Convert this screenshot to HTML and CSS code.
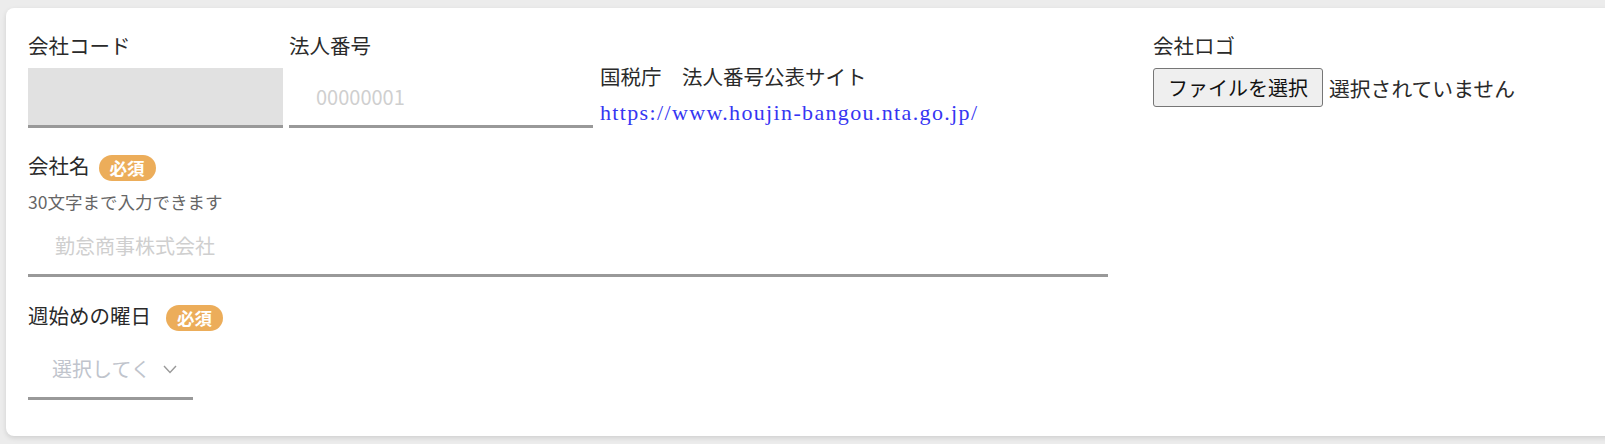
FILE: index.html
```html
<!DOCTYPE html>
<html lang="ja">
<head>
    <meta charset="UTF-8">
    <meta name="viewport" content="width=device-width, initial-scale=1.0">
    <title>会社設定</title>
    <link rel="stylesheet" href="styles.css">
</head>
<body>

    <div class="card">
        <div class="main">
            <div class="top-row">
                <div class="field code">
                    <label>会社コード</label>
                    <input type="text" class="input disabled" disabled>
                </div>
                <div class="field corp">
                    <label>法人番号</label>
                    <input type="text" class="input" placeholder="00000001">
                </div>
                <div class="nta">
                    <p>国税庁　法人番号公表サイト</p>
                    <a href="#">https://www.houjin-bangou.nta.go.jp/</a>
                </div>
            </div>

            <div class="group name">
                <div class="label-row">
                    <label>会社名</label>
                    <span class="badge">必須</span>
                </div>
                <p class="hint">30文字まで入力できます</p>
                <input type="text" class="input" placeholder="勤怠商事株式会社">
            </div>

            <div class="group week">
                <div class="label-row">
                    <label>週始めの曜日</label>
                    <span class="badge wide">必須</span>
                </div>
                <div class="select">
                    <span class="select-text">選択してく</span>
                    <svg width="14" height="9" viewBox="0 0 14 9">
                        <path d="M1 1 L7 7.5 L13 1" fill="none" stroke="#999" stroke-width="1.4"/>
                    </svg>
                </div>
            </div>
        </div>

        <div class="logo">
            <label>会社ロゴ</label>
            <div class="file">
                <button class="file-btn" type="button">ファイルを選択</button>
                <span class="file-name">選択されていません</span>
            </div>
        </div>
    </div>

</body>
</html>
```

FILE: styles.css
```css
html, body {
    overflow: hidden;
}

body {
    font-family: "Noto Sans CJK JP", "Noto Sans", sans-serif;
    background-color: #ececec;
    color: #2a2a2a;
    margin: 0;
    padding: 8px 0 8px 6px;
}

.card {
    display: flex;
    gap: 45px;
    margin-right: -20px;
    background: white;
    padding: 22px 0 36px 22px;
    border-radius: 8px;
    box-shadow: 0 2px 5px rgba(0, 0, 0, 0.12);
}

.main {
    width: 1080px;
}

label {
    display: block;
    font-size: 20.5px;
    line-height: 30px;
}

.top-row {
    display: flex;
    gap: 6px;
}

.field label {
    margin-bottom: 8px;
}

.code {
    width: 255px;
}

.corp {
    width: 304px;
}

.input {
    display: block;
    width: 100%;
    height: 60px;
    box-sizing: border-box;
    padding: 0 27px;
    border: none;
    border-bottom: 3px solid #999;
    background: transparent;
    font-family: "Noto Sans CJK JP", sans-serif;
    font-size: 20px;
    color: #333;
    outline: none;
}

.input::placeholder {
    color: #cfcfcf;
}

.input.disabled {
    background: #e1e1e1;
}

.nta {
    padding: 31px 0 0 1px;
}

.nta p {
    margin: 0 0 7px;
    font-size: 20.5px;
    line-height: 30px;
}

.nta a {
    display: block;
    font-family: "Liberation Serif", serif;
    font-size: 22px;
    letter-spacing: 1.35px;
    line-height: 30px;
    color: #3636f2;
    text-decoration: none;
}

.group.name {
    margin-top: 22px;
}

.group.week {
    margin-top: 23px;
}

.label-row {
    display: flex;
    align-items: flex-start;
    height: 30px;
}

.badge {
    margin: 5px 0 0 9px;
    height: 26px;
    padding: 0 11px;
    border-radius: 13px;
    background: #ecad5a;
    color: white;
    font-size: 17.5px;
    font-weight: bold;
    line-height: 26px;
}

.badge.wide {
    margin-left: 15px;
}

.hint {
    margin: 10px 0 0;
    font-size: 17.5px;
    line-height: 24px;
    color: #666;
}

.name .input {
    margin-top: 3px;
}

.select {
    display: flex;
    align-items: center;
    width: 165px;
    height: 60px;
    box-sizing: border-box;
    margin-top: 10px;
    padding-left: 24px;
    border-bottom: 3px solid #999;
}

.select-text {
    white-space: nowrap;
    font-size: 20px;
    color: #c0c4cc;
}

.select svg {
    margin: 2px 0 0 12px;
}

.logo label {
    margin-bottom: 8px;
}

.file {
    display: flex;
    align-items: center;
    gap: 6px;
}

.file-btn {
    height: 39px;
    padding: 0 14px;
    border: 1px solid #767676;
    border-radius: 3px;
    background: #efefef;
    font-family: "Noto Sans CJK JP", sans-serif;
    font-size: 20px;
    color: #111;
}

.file-name {
    font-size: 20.8px;
}
```
